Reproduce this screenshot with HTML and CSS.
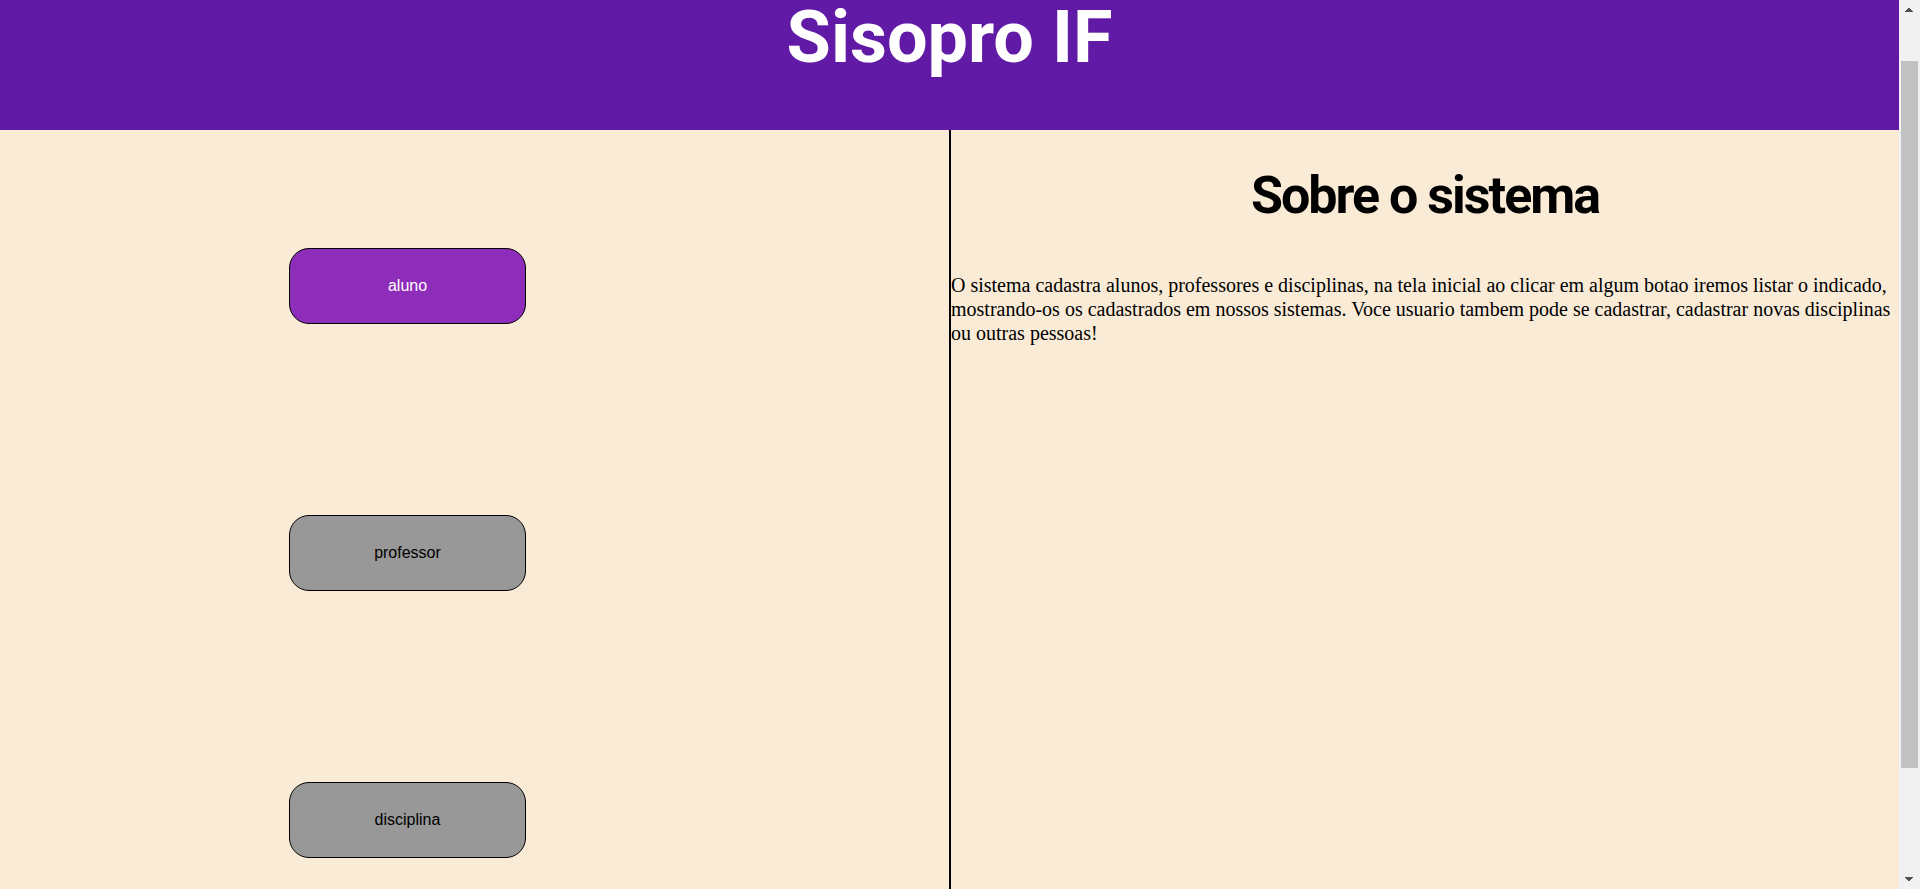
FILE: index.html
```html
<!DOCTYPE html>
<html lang="pt-BR">
<head>
<meta charset="utf-8">
<title>Sisopro IF</title>
<link rel="stylesheet" href="styles.css">
</head>
<body>
<div class="viewport">
  <div class="app">
    <header class="topbar">
      <h1 class="brand">Sisopro IF</h1>
    </header>
    <main class="content">
      <nav class="menu">
        <button class="btn btn-active">aluno</button>
        <button class="btn">professor</button>
        <button class="btn">disciplina</button>
      </nav>
      <section class="about">
        <h2 class="about-title">Sobre o sistema</h2>
        <p class="about-text">O sistema cadastra alunos, professores e disciplinas, na tela inicial ao clicar em algum botao iremos listar o indicado, mostrando-os os cadastrados em nossos sistemas. Voce usuario tambem pode se cadastrar, cadastrar novas disciplinas ou outras pessoas!</p>
      </section>
    </main>
  </div>
  <div class="scrollbar" aria-hidden="true">
    <div class="sb-btn sb-up"></div>
    <div class="sb-track"><div class="sb-thumb"></div></div>
    <div class="sb-btn sb-down"></div>
  </div>
</div>
</body>
</html>
```
FILE: styles.css
```css
html, body {
  margin: 0;
  padding: 0;
}

body {
  background: #faebd7;
  font-family: "Liberation Serif", "Times New Roman", serif;
}

.viewport {
  display: flex;
  height: 889px;
  overflow: hidden;
}

.app {
  flex: 1;
  min-width: 0;
  display: flex;
  flex-direction: column;
}

.topbar {
  flex-shrink: 0;
  height: 130px;
  background: #611aa6;
}

.brand {
  margin: 0;
  padding-top: 2px;
  text-align: center;
  font-family: Roboto, "Liberation Sans", sans-serif;
  font-weight: 700;
  font-size: 72px;
  line-height: 72px;
  color: #ffffff;
}

.content {
  flex: 1;
  display: flex;
  background: #faebd7;
}

.menu {
  box-sizing: border-box;
  width: 951px;
  flex-shrink: 0;
  border-right: 2px solid #000;
  padding-top: 118px;
  padding-left: 289px;
  display: flex;
  flex-direction: column;
  align-items: flex-start;
  gap: 191px;
}

.btn {
  box-sizing: border-box;
  width: 237px;
  height: 76px;
  border: 1px solid #000;
  border-radius: 20px;
  background: #989898;
  color: #000;
  font-family: "Liberation Sans", Arial, sans-serif;
  font-size: 16px;
  padding: 0;
  cursor: pointer;
}

.btn-active {
  background: #8e2dba;
  color: #ffffff;
}

.about {
  flex: 1;
  min-width: 0;
}

.about-title {
  margin: 36px 0 0;
  text-align: center;
  font-family: Roboto, "Liberation Sans", sans-serif;
  font-weight: 700;
  font-size: 52px;
  line-height: 60px;
  letter-spacing: -2px;
  color: #000;
}

.about-text {
  margin: 47px 0 0;
  font-family: "Liberation Serif", "Times New Roman", serif;
  font-size: 20px;
  line-height: 24px;
  color: #000;
}

/* fake browser scrollbar */
.scrollbar {
  width: 21px;
  flex-shrink: 0;
  background: #f1f1f1;
  display: flex;
  flex-direction: column;
}

.sb-btn {
  height: 21px;
  flex-shrink: 0;
  background-repeat: no-repeat;
  background-size: 5px 4px, 5px 4px;
}

.sb-up {
  background-image:
    linear-gradient(to bottom right, transparent 50%, #505050 50%),
    linear-gradient(to bottom left, transparent 50%, #505050 50%);
  background-position: 5px 8px, 10px 8px;
}

.sb-down {
  background-image:
    linear-gradient(to top right, transparent 50%, #505050 50%),
    linear-gradient(to top left, transparent 50%, #505050 50%);
  background-position: 5px 9px, 10px 9px;
}

.sb-track {
  flex: 1;
  padding: 40px 2px 0;
}

.sb-thumb {
  height: 707px;
  background: #c1c1c1;
}
```
